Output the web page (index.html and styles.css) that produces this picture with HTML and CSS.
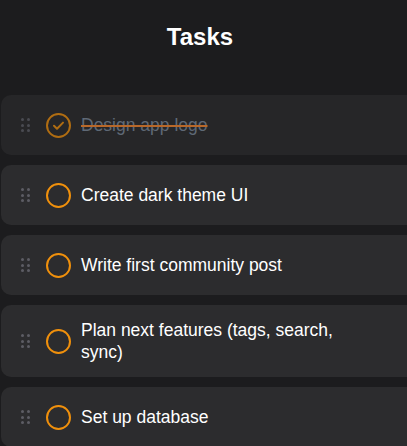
FILE: index.html
```html
<!DOCTYPE html>
<html>
<head>
<meta charset="utf-8">
<link rel="stylesheet" href="styles.css">
</head>
<body>
<header class="header"><h1 class="title">Tasks</h1></header>
<div class="viewport">
<ul class="list">
  <li class="card done">
    <span class="grip"><i></i><i></i><i></i><i></i><i></i><i></i></span>
    <span class="check">
      <svg width="25" height="25" viewBox="0 0 25 25"><circle cx="12.5" cy="12.5" r="11.5" fill="none" stroke="currentColor" stroke-width="2"/><path d="M8 12.8l3 3 6-6.2" fill="none" stroke="currentColor" stroke-width="2" stroke-linecap="round" stroke-linejoin="round"/></svg>
    </span>
    <span class="text">Design app logo</span>
  </li>
  <li class="card">
    <span class="grip"><i></i><i></i><i></i><i></i><i></i><i></i></span>
    <span class="check"><svg width="25" height="25" viewBox="0 0 25 25"><circle cx="12.5" cy="12.5" r="11.5" fill="none" stroke="currentColor" stroke-width="2"/></svg></span>
    <span class="text">Create dark theme UI</span>
  </li>
  <li class="card">
    <span class="grip"><i></i><i></i><i></i><i></i><i></i><i></i></span>
    <span class="check"><svg width="25" height="25" viewBox="0 0 25 25"><circle cx="12.5" cy="12.5" r="11.5" fill="none" stroke="currentColor" stroke-width="2"/></svg></span>
    <span class="text">Write first community post</span>
  </li>
  <li class="card">
    <span class="grip"><i></i><i></i><i></i><i></i><i></i><i></i></span>
    <span class="check"><svg width="25" height="25" viewBox="0 0 25 25"><circle cx="12.5" cy="12.5" r="11.5" fill="none" stroke="currentColor" stroke-width="2"/></svg></span>
    <span class="text">Plan next features (tags, search, sync)</span>
  </li>
  <li class="card">
    <span class="grip"><i></i><i></i><i></i><i></i><i></i><i></i></span>
    <span class="check"><svg width="25" height="25" viewBox="0 0 25 25"><circle cx="12.5" cy="12.5" r="11.5" fill="none" stroke="currentColor" stroke-width="2"/></svg></span>
    <span class="text">Set up database</span>
  </li>
</ul>
</div>
</body>
</html>
```
FILE: styles.css
```css
html, body {
  margin: 0;
  padding: 0;
  background: #1c1c1e;
  overflow: hidden;
  font-family: "Liberation Sans", Arial, sans-serif;
  color: #ffffff;
}
.header {
  padding-top: 23px;
  height: 95px;
  box-sizing: border-box;
}
.title {
  margin: 0;
  font-size: 24px;
  line-height: 28px;
  font-weight: bold;
  text-align: center;
  padding-right: 7px;
}
.viewport {
  overflow: hidden;
  padding-left: 1px;
}
.list {
  list-style: none;
  margin: 0 -20px 0 0;
  padding: 0;
  display: flex;
  flex-direction: column;
  gap: 10px;
}
.card {
  display: flex;
  align-items: center;
  background: #2c2c2e;
  border-radius: 10px;
  padding: 14px 0 14px 20px;
}
.grip {
  display: grid;
  grid-template-columns: 3px 3px;
  grid-auto-rows: 3px;
  column-gap: 3px;
  row-gap: 2.5px;
  width: 9px;
  margin-right: 16px;
}
.grip i {
  display: block;
  width: 3px;
  height: 3px;
  border-radius: 50%;
  background: #5d5d64;
}
.check {
  display: flex;
  align-items: center;
  height: 32px;
  width: 25px;
  color: #f0900c;
  margin-right: 10px;
}
.check svg { display: block; }
.text {
  font-size: 17.5px;
  line-height: 22px;
  max-width: 270px;
}
.done {
  background: #262628;
}
.done .check { color: #b06d12; }
.done .grip i { background: #4a4b52; }
.done .text {
  color: #5f6976;
  text-decoration: line-through;
  text-decoration-color: #b8682a;
  text-decoration-thickness: 2px;
}
```
